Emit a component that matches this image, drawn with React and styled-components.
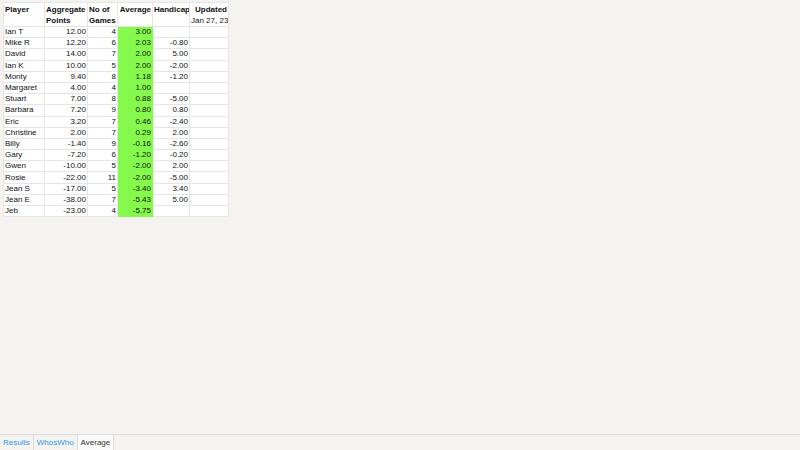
import React from "react";
import styled, { createGlobalStyle } from "styled-components";

const GlobalStyle = createGlobalStyle`
    html, body {
        margin: 0;
        padding: 0;
        background: #f4f3ef;
        font-family: "Liberation Sans", Arial, sans-serif;
    }
`;

const Page = styled.div`
    display: flex;
    flex-direction: column;
    height: 100vh;
    width: 100vw;
`;

const Sheet = styled.div`
    flex: 1;
    padding: 2px 0 0 3px;
`;

const Table = styled.table`
    border-collapse: collapse;
    background: #fff;
    font-size: 8px;
    color: #111;
    table-layout: fixed;
    width: 225px;
`;

const Col = styled.col`
    width: ${p => p.$w}px;
`;

const Th = styled.th`
    border: 1px solid #e6e6e6;
    font-weight: bold;
    text-align: ${p => (p.$right ? "right" : "left")};
    vertical-align: top;
    padding: 1px 1px 0 1px;
    line-height: 11px;
    height: 21px;
    white-space: nowrap;
    overflow: hidden;
`;

const Sub = styled.span`
    display: block;
    font-weight: normal;
`;

const Td = styled.td`
    border: 1px solid #e6e6e6;
    height: 10.2px;
    line-height: 10px;
    padding: 0 1px;
    text-align: ${p => (p.$right ? "right" : "left")};
    background: ${p => (p.$green ? "#85fa4c" : "#fff")};
    border-color: ${p => (p.$green ? "#85fa4c" : "#e6e6e6")};
    white-space: nowrap;
    overflow: hidden;
`;

const TabBar = styled.div`
    display: flex;
    height: 15px;
    border-top: 1px solid #dcdcdc;
    background: #f4f3ef;
    font-size: 8px;
`;

const Tab = styled.div`
    display: flex;
    align-items: center;
    padding: 0 3px;
    border-right: 1px solid #dcdcdc;
    color: ${p => (p.$active ? "#333" : "#2f96f0")};
    background: ${p => (p.$active ? "#fbfbfb" : "transparent")};
`;

const rows = [
    ["Ian T", "12.00", "4", "3.00", ""],
    ["Mike R", "12.20", "6", "2.03", "-0.80"],
    ["David", "14.00", "7", "2.00", "5.00"],
    ["Ian K", "10.00", "5", "2.00", "-2.00"],
    ["Monty", "9.40", "8", "1.18", "-1.20"],
    ["Margaret", "4.00", "4", "1.00", ""],
    ["Stuart", "7.00", "8", "0.88", "-5.00"],
    ["Barbara", "7.20", "9", "0.80", "0.80"],
    ["Eric", "3.20", "7", "0.46", "-2.40"],
    ["Christine", "2.00", "7", "0.29", "2.00"],
    ["Billy", "-1.40", "9", "-0.16", "-2.60"],
    ["Gary", "-7.20", "6", "-1.20", "-0.20"],
    ["Gwen", "-10.00", "5", "-2.00", "2.00"],
    ["Rosie", "-22.00", "11", "-2.00", "-5.00"],
    ["Jean S", "-17.00", "5", "-3.40", "3.40"],
    ["Jean E", "-38.00", "7", "-5.43", "5.00"],
    ["Jeb", "-23.00", "4", "-5.75", ""],
];

export default function App() {
    return (
        <Page>
            <GlobalStyle />
            <Sheet>
                <Table>
                    <colgroup>
                        <Col $w={41} />
                        <Col $w={43} />
                        <Col $w={30} />
                        <Col $w={35} />
                        <Col $w={37} />
                        <Col $w={39} />
                    </colgroup>
                    <thead>
                        <tr>
                            <Th>Player</Th>
                            <Th>Aggregate<br />Points</Th>
                            <Th>No of<br />Games</Th>
                            <Th $right>Average</Th>
                            <Th>Handicap</Th>
                            <Th $right>Updated<Sub>Jan 27, 23</Sub></Th>
                        </tr>
                    </thead>
                    <tbody>
                        {rows.map(r => (
                            <tr key={r[0]}>
                                <Td>{r[0]}</Td>
                                <Td $right>{r[1]}</Td>
                                <Td $right>{r[2]}</Td>
                                <Td $right $green>{r[3]}</Td>
                                <Td $right>{r[4]}</Td>
                                <Td />
                            </tr>
                        ))}
                    </tbody>
                </Table>
            </Sheet>
            <TabBar>
                <Tab>Results</Tab>
                <Tab>WhosWho</Tab>
                <Tab $active>Average</Tab>
            </TabBar>
        </Page>
    );
}
